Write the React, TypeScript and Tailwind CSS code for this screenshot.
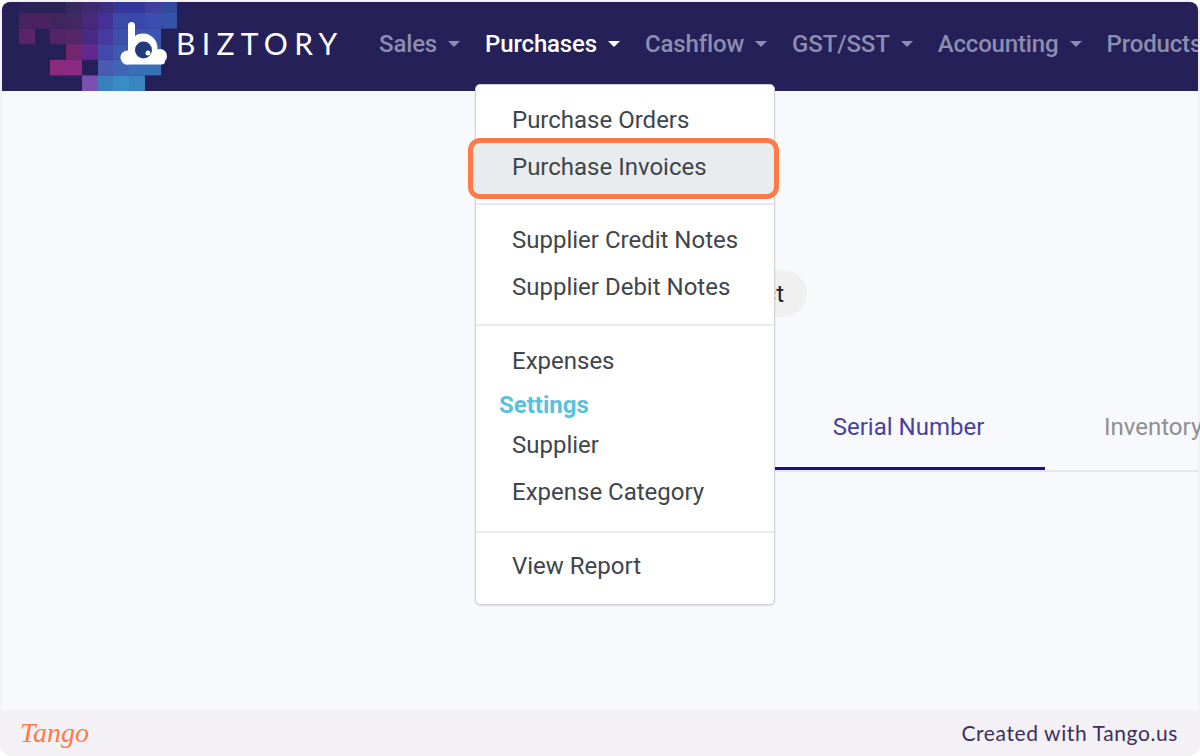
const navItems = ['Sales', 'Purchases', 'Cashflow', 'GST/SST', 'Accounting', 'Products'];

// logo backdrop: [x, row, width, colour]
const pixels: [number, number, number, string][] = [
  [19, 0, 47, '#2a2357'], [66, 0, 16, '#3a2860'], [82, 0, 16, '#41296e'], [98, 0, 15, '#3d2f80'],
  [113, 0, 16, '#35379a'], [129, 0, 16, '#33389a'], [145, 0, 16, '#40409e'], [161, 0, 16, '#314a9e'],
  [19, 1, 31, '#4b2260'], [50, 1, 16, '#40255f'], [66, 1, 16, '#432762'], [82, 1, 16, '#47287a'],
  [98, 1, 15, '#45309a'], [113, 1, 16, '#3a4aa5'], [129, 1, 16, '#3848ad'], [145, 1, 16, '#3b4db0'], [161, 1, 16, '#3452a8'],
  [19, 2, 16, '#5a2468'], [50, 2, 16, '#552468'], [66, 2, 16, '#552668'], [82, 2, 16, '#482a85'],
  [98, 2, 15, '#463a9e'], [113, 2, 16, '#3b50ab'], [129, 2, 32, '#3a55b5'],
  [66, 3, 16, '#72276f'], [82, 3, 16, '#63288f'], [98, 3, 15, '#4448aa'], [113, 3, 48, '#3c5ab0'],
  [50, 4, 16, '#8a2a7a'], [66, 4, 16, '#8a2a85'], [98, 4, 15, '#4a5ab0'], [113, 4, 16, '#3f65b5'], [129, 4, 32, '#3a70b5'],
  [82, 5, 16, '#7a50b0'], [98, 5, 15, '#3a80c0'], [113, 5, 16, '#3a8cc5'], [129, 5, 16, '#3a85c0'],
];

function LogoArt() {
  return (
    <svg className="absolute -left-[2px] top-0" width="180" height="89" viewBox="0 2 180 89">
      {pixels.map(([x, row, w, fill]) => (
        <rect key={`${x}-${row}`} x={x} y={row === 0 ? 2 : 13 + (row - 1) * 15.6} width={w} height={row === 0 ? 11 : 15.6} fill={fill} />
      ))}
      <circle cx="127.5" cy="57.5" r="7" fill="#fff" />
      <circle cx="160" cy="56" r="7" fill="#fff" />
      <rect x="123" y="57" width="42" height="7.5" rx="3.5" fill="#fff" />
      <rect x="128" y="22" width="7" height="32" rx="3.5" fill="#fff" />
      <circle cx="143" cy="48" r="14.5" fill="#fff" />
      <circle cx="143.5" cy="50" r="8.5" fill="#233a7d" />
      <circle cx="148" cy="53" r="2.5" fill="#fff" />
    </svg>
  );
}

function Caret({ active }: { active: boolean }) {
  return (
    <span
      className={`ml-[11px] h-0 w-0 border-x-[6px] border-t-[6px] border-x-transparent ${
        active ? 'border-t-white' : 'border-t-[#8d8db0]'
      }`}
    />
  );
}

function Item({ label }: { label: string }) {
  return <div className="flex h-[47px] items-center pl-[36px]">{label}</div>;
}

export default function App() {
  return (
    <div className="relative h-[756px] w-[1200px] overflow-hidden bg-white font-['Roboto',sans-serif]">
      <div className="flex h-full flex-col rounded-xl bg-[#f3f1f6] px-[2px] pt-[2px]">
        <header className="relative flex h-[89px] shrink-0 items-center overflow-hidden rounded-t-lg bg-[#252058]">
          <LogoArt />
          <span className="absolute left-[174px] top-[19px] font-['Lato',sans-serif] text-[30px] leading-[44px] tracking-[6.3px] text-white">
            BIZTORY
          </span>
          <nav className="ml-[377px] flex items-center gap-[25px] pb-[6px] whitespace-nowrap text-[24px] font-medium tracking-[-0.15px] text-[#8d8db0]">
            {navItems.map((name) => (
              <span key={name} className={`flex items-center ${name === 'Purchases' ? 'text-white' : ''}`}>
                {name}
                <Caret active={name === 'Purchases'} />
              </span>
            ))}
          </nav>
        </header>

        <main className="min-h-0 flex-1 bg-[#f8f9fd]">
          <div className="flex justify-end pr-[391px] pt-[179px]">
            <button className="h-[47px] w-[200px] rounded-full bg-[#f0f0f0] pr-[23px] text-right text-[24px] text-[#212529]">
              Select
            </button>
          </div>
          <div className="ml-[600px] mt-[83px] flex border-b-2 border-[#e4e6ea] pl-[170px] text-[24px]">
            <div className="flex h-[70px] w-[273px] shrink-0 items-start justify-center border-b-[3px] border-[#1d0f8a] pt-[9px] text-[#4b3f9e]">
              Serial Number
            </div>
            <div className="pl-[59px] pt-[9px] whitespace-nowrap text-[#8f8f8f]">Inventory</div>
          </div>
        </main>

        <footer className="flex h-[46px] shrink-0 items-center justify-between pl-[18px] pr-[20px]">
          <span className="font-['Liberation_Serif',serif] text-[28px] italic text-[#ff7a45]">Tango</span>
          <span className="font-['Lato',sans-serif] text-[21px] tracking-[0.6px] text-[#3f2e5c]">Created with Tango.us</span>
        </footer>
      </div>

      {/* dropdown sits over the page */}
      <div className="absolute left-[475px] top-[84px] h-[521px] w-[300px] rounded-[5px] border border-[#cfd1d6] bg-white py-[11px] text-[24px] text-[#40454a] shadow-[0_1px_2px_rgba(0,0,0,0.12)]">
        <Item label="Purchase Orders" />
        <div className="relative flex h-[47px] items-center pl-[36px]">
          <span className="absolute -bottom-[9px] -left-[8px] -right-[5px] -top-[5px] rounded-[12px] border-[5px] border-[#ff7a45] bg-[#e9ecef]" />
          <span className="relative">Purchase Invoices</span>
        </div>
        <div className="mb-[11px] mt-[13px] h-[2px] bg-[#e9ecef]" />
        <Item label="Supplier Credit Notes" />
        <Item label="Supplier Debit Notes" />
        <div className="mb-[11px] mt-[14px] h-[2px] bg-[#e9ecef]" />
        <Item label="Expenses" />
        <div className="flex h-[37px] items-center pl-[23px] pt-[4px] font-bold text-[#5bc0de]">Settings</div>
        <Item label="Supplier" />
        <Item label="Expense Category" />
        <div className="mb-[9px] mt-[16px] h-[2px] bg-[#e9ecef]" />
        <Item label="View Report" />
      </div>
    </div>
  );
}
